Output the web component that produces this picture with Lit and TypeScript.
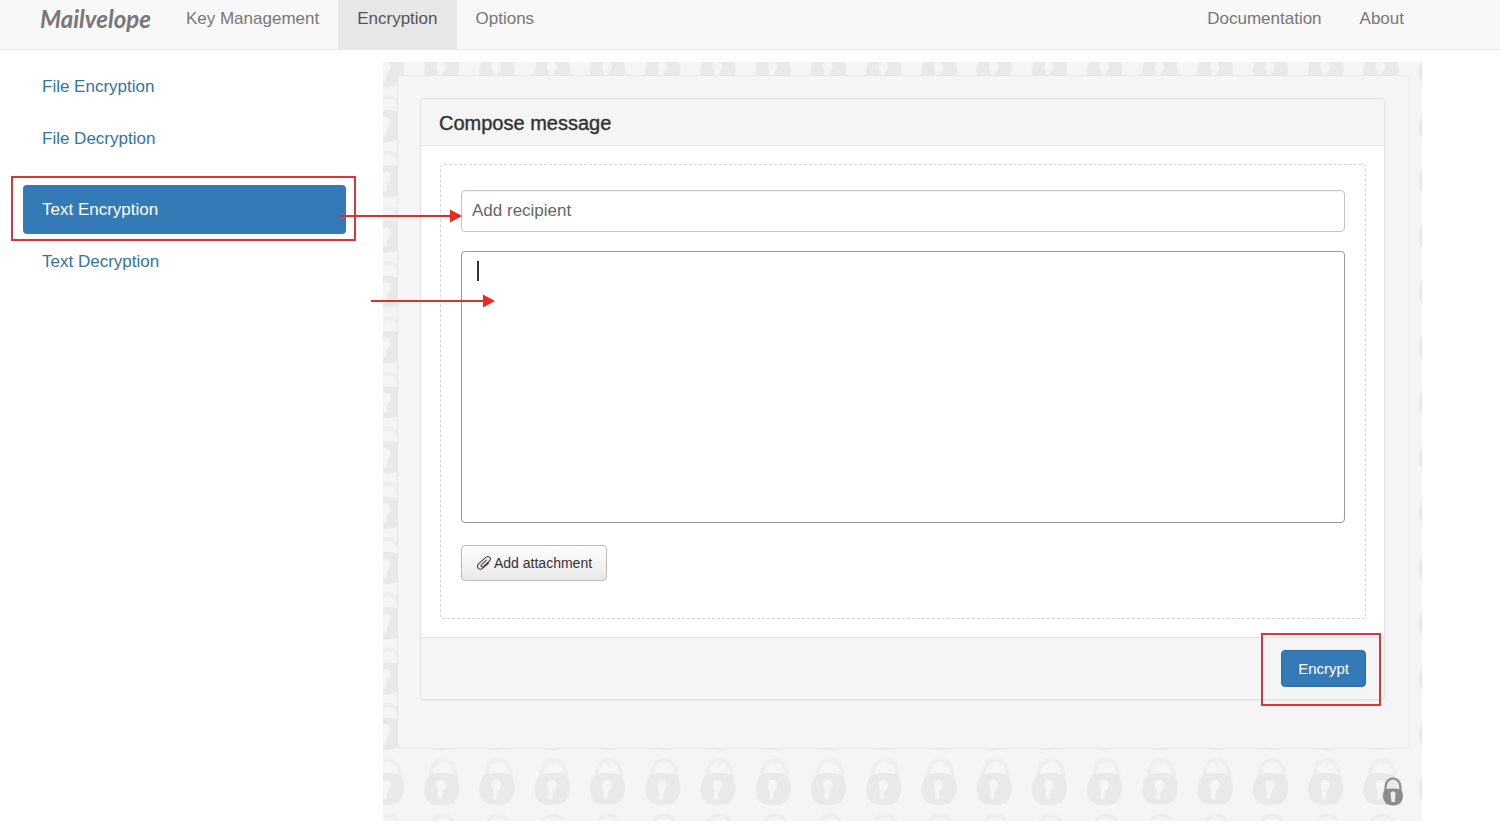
import { LitElement, html, css } from "lit";
import { customElement, property, state } from "lit/decorators.js";
import { classMap } from "lit/directives/class-map.js";

@customElement("lock-backdrop")
class LockBackdrop extends LitElement {
  static styles = css`
    :host { display: block; overflow: hidden; }
    svg { display: block; width: 100%; height: 100%; }
  `;
  render() {
    return html`<svg aria-hidden="true">
      <defs>
        <pattern id="locks" x="30" y="-23" width="55.25" height="55.25" patternUnits="userSpaceOnUse">
          <g transform="translate(11 0)">
            <path d="M7 21 C6 9 11 3 19 3 C27 3 33 9 31 24" fill="none" stroke="#eeeeee" stroke-width="4" />
            <path d="M5 18 C10 15 26 15 31 18 C38 26 36 38 30 45 C25 49 11 49 5 45 C-2 38 -1 26 5 18 Z" fill="#e9e9e9" />
            <path d="M13 24 C16 21 22 22 22 28 C22 31 19 32 18 36 L18 42 L14 42 L14 32 C12 30 12 27 13 24 Z" fill="#f5f5f5" />
          </g>
        </pattern>
      </defs>
      <rect width="100%" height="100%" fill="#f5f5f5" />
      <rect width="100%" height="100%" fill="url(#locks)" />
    </svg>`;
  }
}

@customElement("callout-arrow")
class CalloutArrow extends LitElement {
  static styles = css`
    :host { display: block; height: 14px; pointer-events: none; }
    .row { display: flex; align-items: center; height: 14px; }
    .line { flex: 1; height: 2px; background: #d8322c; }
    svg { display: block; }
  `;
  render() {
    return html`<div class="row">
      <span class="line"></span>
      <svg width="12" height="14" aria-hidden="true"><path d="M0 0.5 L12 7 L0 13.5 Z" fill="#ea2a22" /></svg>
    </div>`;
  }
}

@customElement("side-nav")
class SideNav extends LitElement {
  @state() active = "Text Encryption";
  static styles = css`
    nav { display: flex; flex-direction: column; gap: 22px; }
    .group { display: flex; flex-direction: column; gap: 3px; }
    a {
      position: relative; display: block; padding: 0 19px;
      font-size: 17px; line-height: 49px; color: #33739f;
      text-decoration: none; border-radius: 4px;
    }
    .active { background: #337ab7; color: #fff; }
    .mark { position: absolute; inset: -9px -10px -7px -12px; border: 2px solid #d9363b; }
    callout-arrow { position: absolute; left: 317px; width: 122px; top: 24px; z-index: 2; }
  `;
  link(name: string) {
    const active = name === this.active;
    return html`<a href="#" class=${classMap({ active })}
      >${name}${active ? html`<span class="mark"></span><callout-arrow></callout-arrow>` : ""}</a>`;
  }
  render() {
    return html`<nav aria-label="Encryption">
      <div class="group">${["File Encryption", "File Decryption"].map((n) => this.link(n))}</div>
      <div class="group">${["Text Encryption", "Text Decryption"].map((n) => this.link(n))}</div>
    </nav>`;
  }
}

@customElement("compose-panel")
class ComposePanel extends LitElement {
  static styles = css`
    :host { display: block; }
    *, *::before { box-sizing: border-box; }
    .panel { border: 1px solid #e2e2e2; border-radius: 4px; background: #fff; box-shadow: 0 1px 2px #0000000d; }
    header { padding: 2px 18px 0; background: #f5f5f5; border-bottom: 1px solid #e6e6e6; border-radius: 4px 4px 0 0; }
    h1 { margin: 0; font-size: 20px; line-height: 44px; font-weight: 500; color: #333; -webkit-text-stroke: 0.4px #333; }
    .body { padding: 18px 18px 18px 19px; }
    .drop {
      display: flex; flex-direction: column; align-items: stretch;
      padding: 25px 20px 37px; border: 1px dashed #d4d4d4; border-radius: 4px;
    }
    input, textarea, button { font-family: inherit; display: block; }
    input {
      width: 100%; height: 42px; padding: 0 10px; border: 1px solid #c4c4c4; border-radius: 4px;
      font-size: 17px; color: #555; background: #fff; box-shadow: inset 0 1px 1px #0000000d; outline: none;
    }
    input::placeholder { color: #666; opacity: 1; }
    .editor { position: relative; margin: 19px 0 22px; }
    textarea {
      width: 100%; height: 272px; padding: 10px 14px; border: 1px solid #999; border-radius: 4px;
      font-size: 17px; resize: none; outline: none;
    }
    .caret { position: absolute; left: 16px; top: 10px; width: 2px; height: 20px; background: #333; }
    callout-arrow { position: absolute; left: -90px; width: 124px; top: 43px; }
    .attach {
      align-self: flex-start; display: flex; align-items: center; gap: 2px; height: 36px; padding: 0 14px;
      border: 1px solid #bbb; border-radius: 4px; background: linear-gradient(#fff, #e8e8e8);
      font-size: 14px; color: #333;
    }
    footer {
      display: flex; justify-content: flex-end; padding: 12px 18px;
      background: #f5f5f5; border-top: 1px solid #e2e2e2; border-radius: 0 0 4px 4px;
    }
    .action { position: relative; }
    .action::before { content: ""; position: absolute; inset: -17px -15px -19px -20px; border: 2px solid #d9363b; }
    .primary {
      position: relative; height: 37px; padding: 0 16px; border: 1px solid #2e6da4; border-radius: 4px;
      background: #337ab7; color: #fff; font-size: 15px;
    }
  `;
  render() {
    return html`<section class="panel">
      <header><h1>Compose message</h1></header>
      <div class="body">
        <div class="drop">
          <input type="text" placeholder="Add recipient" aria-label="Add recipient" />
          <div class="editor">
            <textarea aria-label="Message"></textarea>
            <span class="caret"></span>
            <callout-arrow></callout-arrow>
          </div>
          <button class="attach" type="button">
            <svg width="16" height="16" viewBox="0 0 16 16" fill="none" stroke="#444" stroke-width="1.1" stroke-linecap="round" aria-hidden="true">
              <path d="M10.4 5.2 L5.6 9.6 C4.2 11.2 6 12.8 7.5 11.4 L13.4 6 C16 3.2 12.6 0.2 9.8 2.4 L2.8 8.6 C-0.4 11.8 3.2 16.2 6.6 13.4 L12.6 8.2" />
            </svg>
            Add attachment
          </button>
        </div>
      </div>
      <footer><div class="action"><button class="primary" type="button">Encrypt</button></div></footer>
    </section>`;
  }
}

@customElement("app-root")
class AppRoot extends LitElement {
  @property() current = "Encryption";
  static styles = css`
    :host {
      display: block; min-height: 100vh; background: #fff;
      font-family: "Liberation Sans", Arial, sans-serif;
    }
    * { box-sizing: border-box; }
    .top { display: flex; height: 50px; padding: 0 77px 0 21px; background: #f8f8f8; border-bottom: 1px solid #ebebeb; }
    .top a { padding: 0 19px 12px; font-size: 17px; line-height: 37px; color: #777; text-decoration: none; }
    .top .brand { padding-right: 16px; font-family: Lato, sans-serif; font-size: 24px; font-style: italic; font-weight: 700; }
    .top .current { background: #e7e7e7; color: #555; }
    .top .push { margin-left: auto; }
    .page { display: grid; grid-template-columns: 323px minmax(0, 1fr); column-gap: 37px; padding: 12px 78px 14px 23px; }
    .stage { position: relative; padding: 13px 12px 72px 14px; }
    .stage lock-backdrop { position: absolute; inset: 0; }
    .well { position: relative; padding: 22px 24px 48px 22px; border: 1px solid #e6e6e6; border-radius: 4px; background: #f5f5f5; }
    .badge { position: absolute; right: 19px; bottom: 14px; }
    side-nav { position: relative; z-index: 1; }
  `;
  item(name: string, push = false) {
    return html`<a href="#" class=${classMap({ current: name === this.current, push })}>${name}</a>`;
  }
  render() {
    return html`
      <nav class="top" aria-label="Main">
        <a class="brand" href="#">Mailvelope</a>
        ${["Key Management", "Encryption", "Options"].map((n) => this.item(n))}
        ${this.item("Documentation", true)}${this.item("About")}
      </nav>
      <div class="page">
        <side-nav></side-nav>
        <main class="stage">
          <lock-backdrop></lock-backdrop>
          <div class="well"><compose-panel></compose-panel></div>
          <svg class="badge" width="20" height="30" viewBox="0 0 20 30" aria-hidden="true">
            <path d="M2.6 14 V10 C3 -1.5 17 -1.5 17.4 10 V14" fill="none" stroke="#909090" stroke-width="2.4" />
            <path d="M2 12.5 C7 11 13 11 18 12.5 C21 17 20.5 22.5 17 26.5 C13 29 7 29 3 26.5 C-0.5 22.5 -1 17 2 12.5 Z" fill="#8c8c8c" />
            <path d="M7.5 16 C8.5 14 12 14 12.5 16.5 L12 25 H8.5 Z" fill="#eee" />
          </svg>
        </main>
      </div>`;
  }
}
